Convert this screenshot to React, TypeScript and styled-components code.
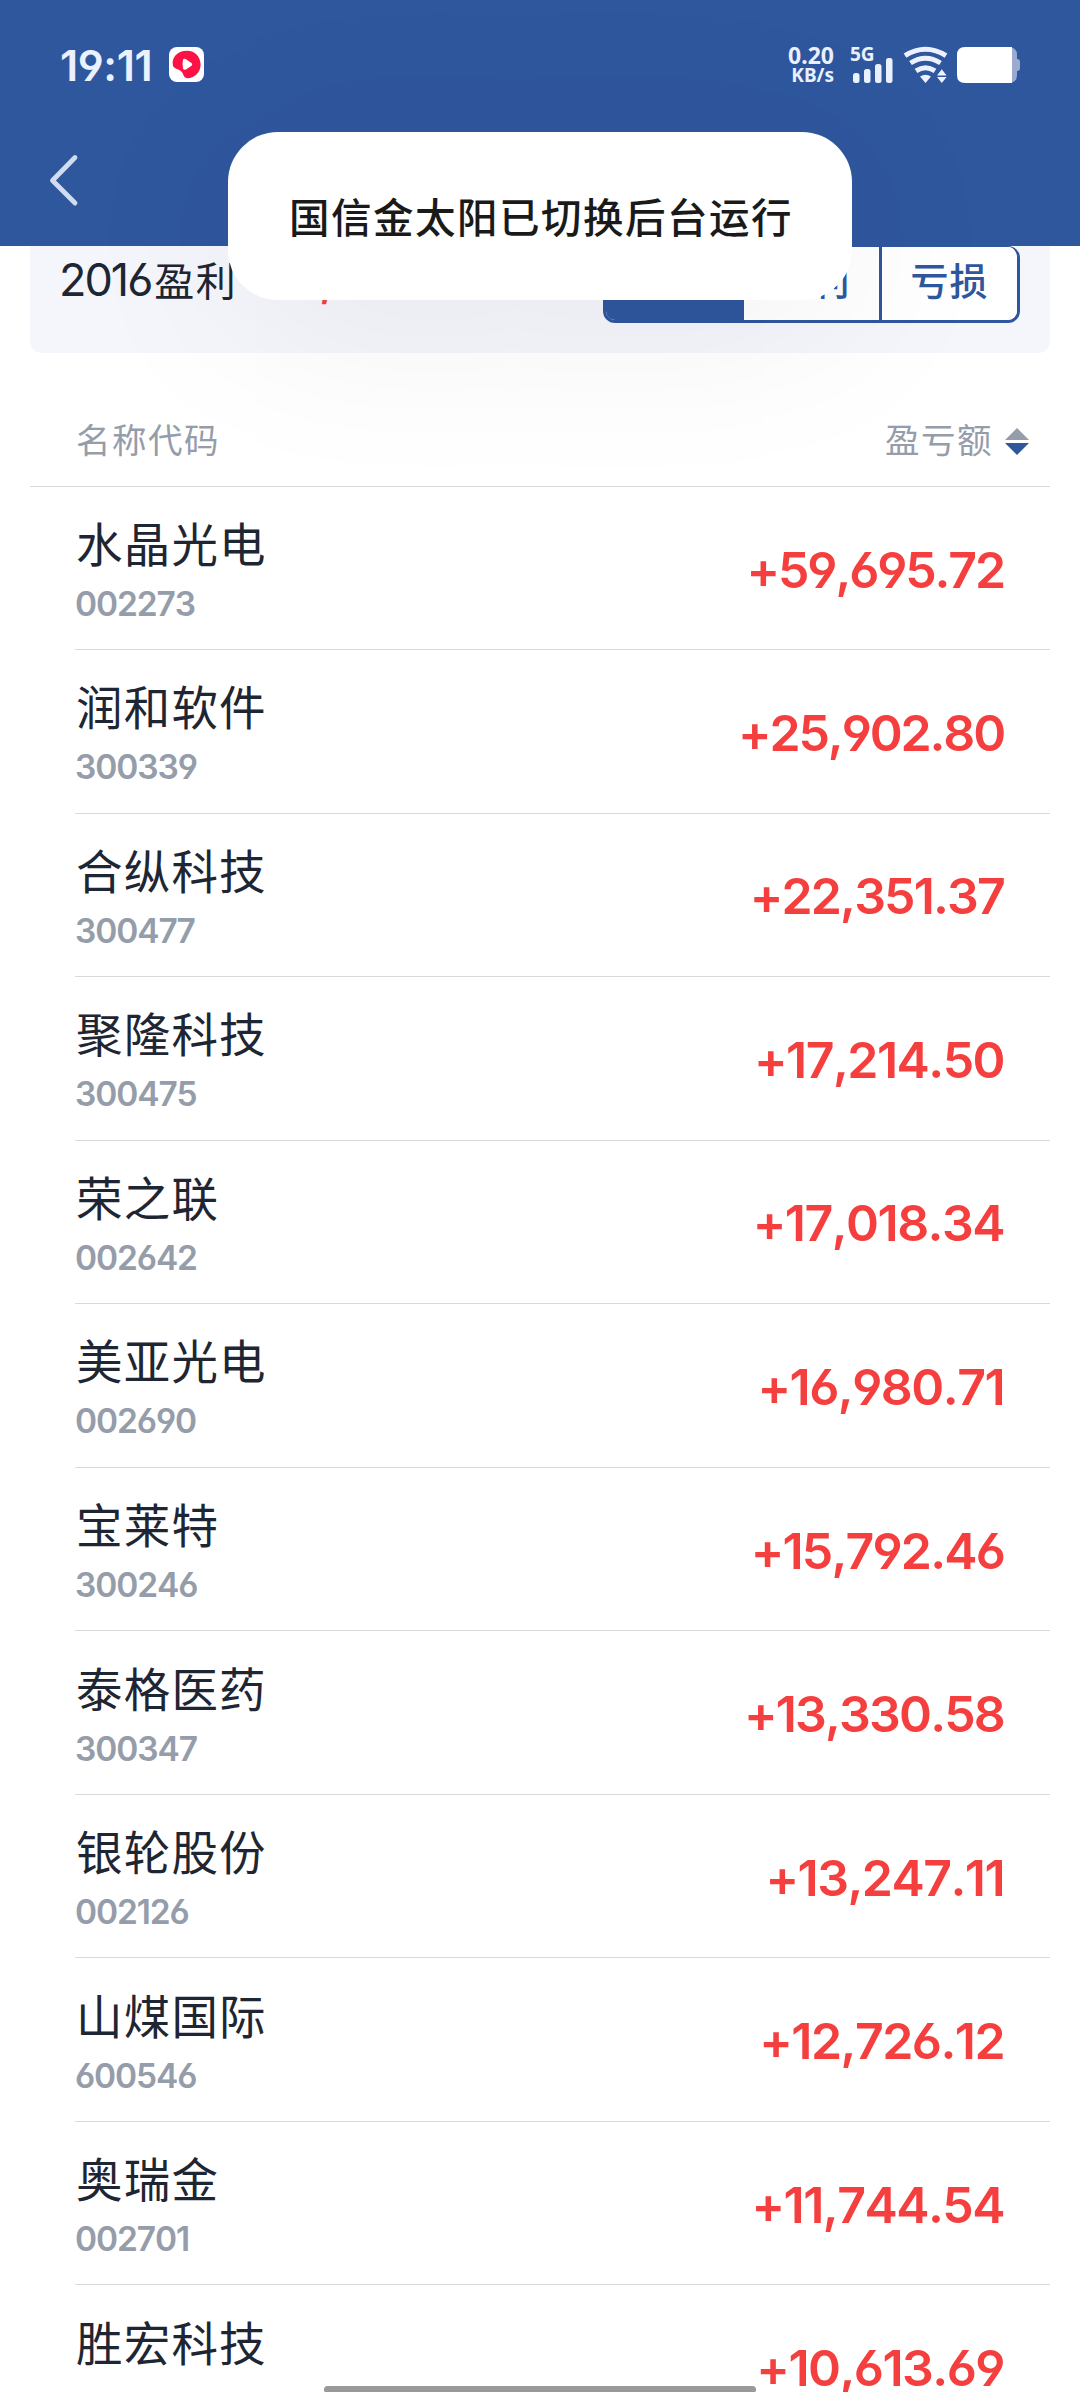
import React from "react";
import styled, { createGlobalStyle } from "styled-components";

const cjk = `"Noto Sans CJK SC", sans-serif`;
const blue = "#2f579e";

const GlobalStyle = createGlobalStyle`
  html, body { margin: 0; padding: 0; background: #fff; }
  * { box-sizing: border-box; }
`;

const Screen = styled.div`
  position: relative;
  width: 1080px;
  height: 2392px;
  overflow: hidden;
  background: #fff;
  font-family: Inter, ${cjk};
  font-feature-settings: "cv03", "cv04";
  font-kerning: none;
  color: #1f2633;
  white-space: nowrap;
`;

const Header = styled.header`
  height: 246px;
  background: ${blue};
  display: flex;
  flex-direction: column;
`;

const StatusBar = styled.div`
  height: 129px;
  padding: 0 60px;
  display: flex;
  align-items: center;
  justify-content: space-between;
  color: #ebf1ff;
`;

const StatusGroup = styled.div<{ $gap?: number }>`
  display: flex;
  align-items: center;
  gap: ${(p) => p.$gap ?? 0}px;
`;

const Clock = styled.span`
  font-size: 43px;
  font-weight: 600;
  line-height: 50px;
  width: 109px;
  letter-spacing: -0.4px;
`;

const Speed = styled.div`
  display: flex;
  flex-direction: column;
  align-items: flex-end;
  font-family: "Noto Sans", sans-serif;
  font-weight: 700;
`;

const SpeedText = styled.span<{ $size: number }>`
  font-size: ${(p) => p.$size}px;
  line-height: 20px;
`;

const NetworkType = styled.span`
  align-self: flex-start;
  margin: -1px -35px 0 0;
  width: 25px;
  font-family: "Noto Sans", sans-serif;
  font-size: 19px;
  font-weight: 700;
  line-height: 18px;
`;

const Nav = styled.nav`
  height: 117px;
  padding: 22px 0 0 48px;
`;

const Summary = styled.section`
  height: 107px;
  margin: 0 30px;
  padding: 0 30px;
  border-radius: 0 0 12px 12px;
  background: #f4f6fb;
  display: flex;
  justify-content: space-between;
`;

const SummaryLabel = styled.div`
  display: flex;
  align-items: baseline;
  font-size: 40px;
  line-height: 68px;
  letter-spacing: 1.4px;
`;

const Year = styled.span`
  font-size: 45px;
  letter-spacing: -2px;
  margin: 0 3px 0 -1px;
`;

const SummaryValue = styled.span`
  color: #f53f3f;
  margin-left: 82px;
  font-size: 45px;
  font-weight: 600;
`;

const Tabs = styled.div`
  width: 417px;
  height: 77px;
  border: 3px solid ${blue};
  border-top-width: 1px;
  border-radius: 12px;
  overflow: hidden;
  display: grid;
  grid-template-columns: 135px 138px 1fr;
  background: #fff;
`;

const Tab = styled.div<{ $active?: boolean }>`
  display: flex;
  justify-content: center;
  font-size: 38px;
  font-weight: 500;
  line-height: 69px;
  letter-spacing: 1px;
  color: ${(p) => (p.$active ? "#fff" : blue)};
  background: ${(p) => (p.$active ? blue : "#fff")};
  & + & { border-left: 3px solid ${blue}; }
`;

const Columns = styled.div`
  height: 134px;
  margin: 0 30px;
  padding: 53px 21px 0 46px;
  border-bottom: 1px solid #d8dade;
  display: flex;
  justify-content: space-between;
  color: #959daa;
  font-size: 34.5px;
  line-height: 70px;
  letter-spacing: 1.5px;
`;

const SortLabel = styled.div`
  display: flex;
  align-items: center;
  gap: 12px;
  height: 70px;
`;

const List = styled.div`
  margin: 0 30px 0 75px;
`;

const Row = styled.div`
  height: 163.55px;
  padding-right: 46px;
  border-bottom: 1px solid #d8dade;
  display: flex;
  align-items: center;
  justify-content: space-between;
  &:first-child { height: 163px; }
`;

const Stock = styled.div`
  display: flex;
  flex-direction: column;
  padding-top: 6px;
`;

const StockName = styled.span`
  padding-left: 1px;
  font-size: 46.5px;
  line-height: 66px;
  letter-spacing: 1.2px;
`;

const StockCode = styled.span`
  font-size: 33.5px;
  font-weight: 600;
  line-height: 52px;
  color: #959daa;
  letter-spacing: -1.1px;
`;

const Amount = styled.span<{ $tracking: number }>`
  color: #f53f3f;
  font-size: 50px;
  font-weight: 600;
  letter-spacing: ${(p) => p.$tracking}px;
  padding-top: 3px;
`;

const Toast = styled.div`
  position: absolute;
  left: 228px;
  top: 132px;
  width: 624px;
  height: 168px;
  border-radius: 50px;
  background: #fff;
  box-shadow: 0 24px 190px rgba(0, 0, 0, 0.065);
  display: flex;
  align-items: center;
  justify-content: center;
  color: #1a1a1a;
  font-size: 40.5px;
  font-weight: 500;
  letter-spacing: 1.5px;
  padding: 0 0 1px 2px;
`;

const HomeBar = styled.div`
  position: absolute;
  left: 324px;
  top: 2386px;
  width: 432px;
  height: 7px;
  border-radius: 4px;
  background: #999;
`;

const AppBadge = () => (
  <svg width="35" height="35" viewBox="0 0 35 35">
    <rect width="35" height="35" rx="8" fill="#fff" />
    <path d="M4 19C2 10 9 3.8 18 3.8C26 3.8 31.6 10 31.6 17.5C31.6 26 25 31.2 18.5 31.2C15 31.2 14.6 28 13.4 25.8C11 21.8 6 22.5 4 19Z" fill="#fe1145" />
    <path d="M14 12.4Q15.5 11.2 17 12.2L22.5 16Q24 17.4 22.5 18.8L17 22.4Q14.6 23.4 14 21.4Q13 17 14 12.4Z" fill="#fff" />
  </svg>
);

const StatusIcons = () => (
  <svg width="167" height="38" viewBox="853 46 167 38">
    <g fill="#ebf1ff">
      <rect x="853" y="73" width="6.5" height="10" rx="2.5" />
      <rect x="864" y="69" width="6.5" height="14" rx="2.5" />
      <rect x="875" y="64" width="6.5" height="19" rx="2.5" />
      <rect x="886" y="58" width="6.5" height="25" rx="2.5" />
      <path d="M925.5 83L920 76.5Q925.5 73 931 76.5Z" />
      <path d="M937 75.4L941.8 69.2L946.6 75.4ZM937 77L941.8 83L946.6 77Z" />
    </g>
    <g fill="none" stroke="#ebf1ff" strokeWidth="5">
      <path d="M905 55.6Q925.5 42.8 946 55.6" />
      <path d="M910.5 63Q925.5 53.6 940.5 63" />
      <path d="M916 70.8Q925.5 64.6 935 70.8" />
    </g>
    <path d="M1008 47Q1017 47 1017 55V59Q1020 59 1020 62V68Q1020 71 1017 71V75Q1017 83 1008 83Z" fill="#9babd0" />
    <path d="M965 47H1012V83H965Q957 83 957 75V55Q957 47 965 47Z" fill="#fff" />
  </svg>
);

const BackIcon = () => (
  <svg width="34" height="56" viewBox="0 0 34 56" fill="none" stroke="#d3dcee" strokeWidth="4.8" strokeLinecap="round" strokeLinejoin="round">
    <path d="M27 6.5L4.5 29.5L27 52" />
  </svg>
);

const SortIcon = () => (
  <svg width="24" height="27" viewBox="0 0 24 27">
    <path d="M0 12L12 0L24 12Z" fill="#959daa" />
    <path d="M0 15L12 27L24 15Z" fill={blue} />
  </svg>
);

// The digit 1 is narrow, so amounts that contain it are set a little looser.
const trackingFor = (amount: string) => {
  const ones = amount.split("1").length - 1;
  return -2.15 + 0.3 * Math.min(ones, 2);
};

const stocks = [
  ["水晶光电", "002273", "+59,695.72"],
  ["润和软件", "300339", "+25,902.80"],
  ["合纵科技", "300477", "+22,351.37"],
  ["聚隆科技", "300475", "+17,214.50"],
  ["荣之联", "002642", "+17,018.34"],
  ["美亚光电", "002690", "+16,980.71"],
  ["宝莱特", "300246", "+15,792.46"],
  ["泰格医药", "300347", "+13,330.58"],
  ["银轮股份", "002126", "+13,247.11"],
  ["山煤国际", "600546", "+12,726.12"],
  ["奥瑞金", "002701", "+11,744.54"],
  ["胜宏科技", "", "+10,613.69"],
];

export default function App() {
  return (
    <>
      <GlobalStyle />
      <Screen>
        <Header>
          <StatusBar>
            <StatusGroup>
              <Clock>19:11</Clock>
              <AppBadge />
            </StatusGroup>
            <StatusGroup $gap={16}>
              <Speed>
                <SpeedText $size={23}>0.20</SpeedText>
                <SpeedText $size={19}>KB/s</SpeedText>
              </Speed>
              <StatusGroup $gap={13}>
                <NetworkType>5G</NetworkType>
                <StatusIcons />
              </StatusGroup>
            </StatusGroup>
          </StatusBar>
          <Nav>
            <BackIcon />
          </Nav>
        </Header>
        <Summary>
          <SummaryLabel>
            <Year>2016</Year>盈利
            <SummaryValue>,</SummaryValue>
          </SummaryLabel>
          <Tabs>
            <Tab $active />
            <Tab>盈利</Tab>
            <Tab>亏损</Tab>
          </Tabs>
        </Summary>
        <Columns>
          <span>名称代码</span>
          <SortLabel>
            盈亏额
            <SortIcon />
          </SortLabel>
        </Columns>
        <List>
          {stocks.map(([name, code, amount]) => (
            <Row key={name}>
              <Stock>
                <StockName>{name}</StockName>
                <StockCode>{code || "\u00a0"}</StockCode>
              </Stock>
              <Amount $tracking={trackingFor(amount)}>{amount}</Amount>
            </Row>
          ))}
        </List>
        <Toast>国信金太阳已切换后台运行</Toast>
        <HomeBar />
      </Screen>
    </>
  );
}
